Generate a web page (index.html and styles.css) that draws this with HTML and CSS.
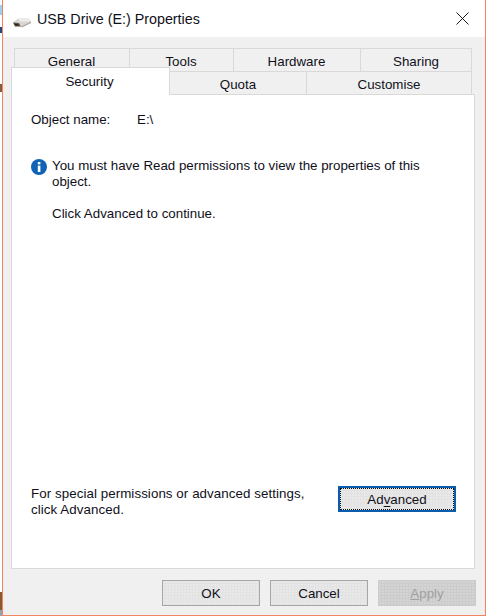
FILE: index.html
```html
<!DOCTYPE html>
<html lang="en">
<head>
<meta charset="utf-8">
<title>USB Drive (E:) Properties</title>
<link rel="stylesheet" href="styles.css">
</head>
<body>
<div class="window">
  <header class="titlebar">
    <svg class="drive" width="20" height="12" viewBox="0 0 20 12">
      <path d="M1 6.5 L6 2.5 H17 L19 5.5 L9 10.5 H3 Z" fill="#d8d6d4"/>
      <path d="M6 2.5 H17 L19 5.5 H8 Z" fill="#eeedec"/>
      <path d="M1 6.5 L7 7 L9 10.5 H3 Z" fill="#6b5a48"/>
      <path d="M2 7.5 L6 8 L7 9.5 H3.5 Z" fill="#2a2018"/>
      <path d="M9 10.5 L19 5.5 V7 L10 11.5 Z" fill="#a9a6a3"/>
    </svg>
    <h1 class="title">USB Drive (E:) Properties</h1>
    <svg class="close" width="13" height="13" viewBox="0 0 13 13"><path d="M.5.5 12.5 12.5M12.5.5.5 12.5" stroke="#1a1a1a" stroke-width="1" fill="none"/></svg>
  </header>
  <main class="client">
    <div class="tabs">
      <div class="row row-back">
        <div class="tab t-general">General</div>
        <div class="tab t-tools">Tools</div>
        <div class="tab t-hardware">Hardware</div>
        <div class="tab t-sharing">Sharing</div>
      </div>
      <div class="row row-front">
        <div class="tab selected">Security</div>
        <div class="tab t-quota">Quota</div>
        <div class="tab t-customise">Customise</div>
      </div>
    </div>
    <section class="panel">
      <div class="object"><span class="label">Object name:</span><span>E:\</span></div>
      <div class="notice">
        <svg class="info" width="16" height="16" viewBox="0 0 16 16">
          <circle cx="8" cy="8" r="8" fill="#0f63b6"/>
          <rect x="6.8" y="6.6" width="2.6" height="6.4" fill="#fff"/>
          <rect x="6.8" y="3" width="2.6" height="2.4" fill="#fff"/>
        </svg>
        <div class="notice-text">
          <p>You must have Read permissions to view the properties of this object.</p>
          <p class="continue">Click Advanced to continue.</p>
        </div>
      </div>
      <div class="spacer"></div>
      <div class="foot">
        <p class="foot-text">For special permissions or advanced settings,<br>click Advanced.</p>
        <button class="btn advanced" type="button"><span class="focus">Ad<u>v</u>anced</span></button>
      </div>
    </section>
    <div class="actions">
      <button class="btn" type="button">OK</button>
      <button class="btn" type="button">Cancel</button>
      <button class="btn disabled" type="button"><u>A</u>pply</button>
    </div>
  </main>
</div>
</body>
</html>
```
FILE: styles.css
```css
* { box-sizing: border-box; }
html, body { margin: 0; height: 100%; }
body {
  width: 487px;
  height: 616px;
  overflow: hidden;
  padding-left: 2px;
  font-family: "Liberation Sans", Arial, sans-serif;
  font-size: 13.33px;
  color: #10101a;
  background: linear-gradient(to bottom,
    #fff 0 5px, #9fd0f0 5px 15px, #fff 15px 27px, #234a7a 27px 33px, #fff 33px 84px,
    #8a5a3a 84px 92px, #fff 92px 592px, #8a5a2a 592px 610px, #9aa0b0 610px 616px) 0 0 / 2px 100% no-repeat #fff;
}
.window {
  width: 484px;
  height: 616px;
  border: 1px solid #f4845f;
  border-top: 0;
  display: flex;
  flex-direction: column;
  background: #f0f0f0;
}
.titlebar {
  height: 37px;
  flex: none;
  background: #fff;
  display: flex;
  align-items: center;
  padding: 0 16px 0 9px;
}
.drive { margin-top: 6px; flex: none; }
.title {
  margin: 0 0 0 5px;
  font-size: 14.3px;
  font-weight: 400;
  flex: 1;
}
.close { flex: none; }
.client {
  flex: 1;
  display: flex;
  flex-direction: column;
  padding: 11px 8px 9px 8px;
}
.tabs { margin-left: 3px; width: 458px; }
.row { display: flex; height: 23px; }
.row-front { height: 24px; }
.tab {
  display: flex;
  align-items: center;
  justify-content: center;
  background: #f0f0f0;
  border: 1px solid #d9d9d9;
  border-left-width: 0;
  padding-top: 2px;
}
.row-back .tab { border-bottom: 0; padding-top: 3px; }
.t-general { border-left-width: 1px; width: 116px; padding-right: 1px; }
.t-tools { width: 104px; padding-right: 1px; }
.t-hardware { width: 127px; padding-right: 1px; }
.t-sharing { width: 111px; }
.t-quota { width: 137px; }
.t-customise { width: 165px; }
.selected {
  width: 159px;
  height: 28px;
  margin: -4px 0 0 -3px;
  background: #fff;
  border: 1px solid #d9d9d9;
  border-bottom: 0;
  position: relative;
  z-index: 1;
  padding: 0 2px 1px 0;
}
.panel {
  width: 464px;
  height: 475px;
  margin-top: -1px;
  background: #fff;
  border: 1px solid #d9d9d9;
  padding: 17px 18px 0 19px;
  display: flex;
  flex-direction: column;
  flex: none;
}
.object { display: flex; line-height: 15px; }
.label { width: 106px; }
.notice { display: flex; margin-top: 31px; }
.info { flex: none; margin: 1px 5px 0 0; }
.notice-text { width: 385px; line-height: 16px; }
p { margin: 0; }
.continue { margin-top: 16px; }
.spacer { flex: 1; }
.foot {
  display: flex;
  justify-content: space-between;
  align-items: flex-start;
  margin-bottom: 50px;
}
.foot-text { line-height: 16px; letter-spacing: .07px; }
.btn {
  width: 98px;
  height: 26px;
  padding: 0;
  font: inherit;
  color: inherit;
  border: 1px solid #a6a6a6;
  background-color: #e2e2e2;
  background-image: radial-gradient(circle at 1px 1px, #f1f1f1 .6px, transparent .8px);
  background-size: 3px 3px;
}
.advanced {
  width: 118px;
  border: 2px solid #0a5cad;
}
.focus {
  display: flex;
  align-items: center;
  justify-content: center;
  width: 100%;
  height: 100%;
  border: 1px dotted #111;
}
.focus u { text-underline-offset: 2px; }
.actions {
  display: flex;
  justify-content: flex-end;
  gap: 10px;
  margin-top: 11px;
  width: 465px;
}
.disabled {
  background-color: #cccccc;
  border-color: #cccccc;
  color: #a0a0a0;
  background-image: radial-gradient(circle at 1px 1px, #dcdcdc .6px, transparent .8px);
}
```
